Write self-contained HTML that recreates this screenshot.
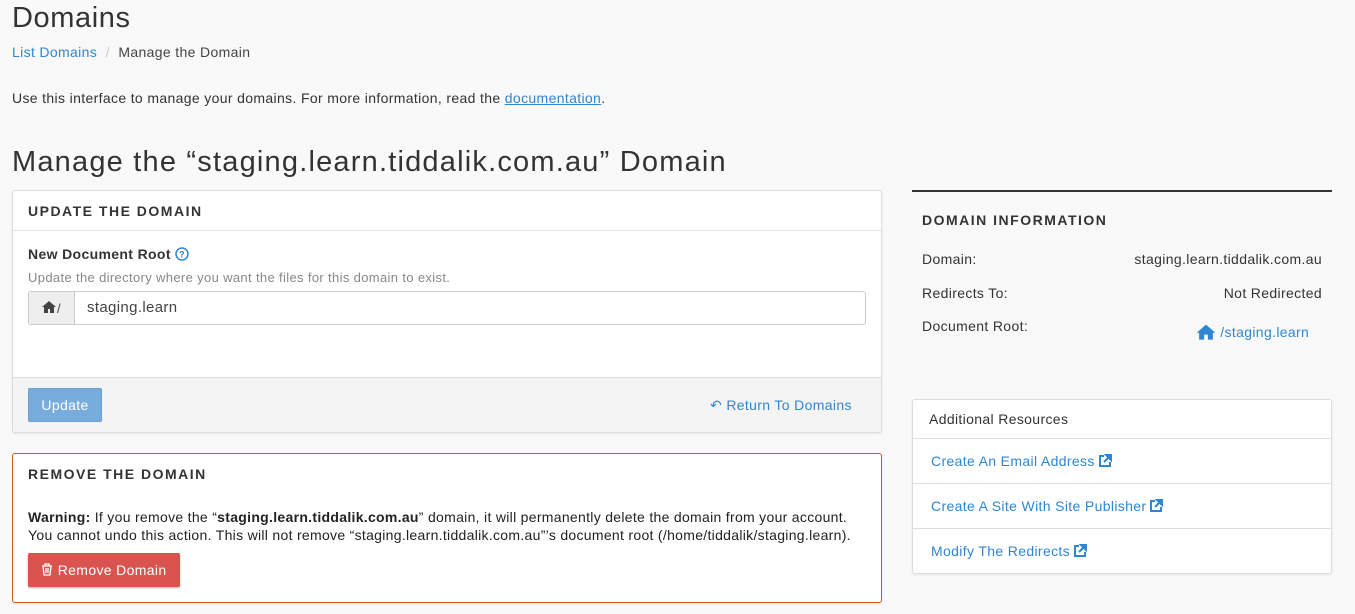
<!DOCTYPE html>
<html><head><meta charset="utf-8"><style>
*{box-sizing:border-box;margin:0;padding:0}
body{width:1355px;height:614px;overflow:hidden;background:#f9f9f9;font-family:"Liberation Sans",sans-serif;color:#333;font-size:14px;position:relative;letter-spacing:.35px}
.a{position:absolute;white-space:nowrap}
a,.lk{color:#2f86d2;text-decoration:none}
.panel{position:absolute;background:#fff;border:1px solid #ddd;border-radius:3px;box-shadow:0 1px 2px rgba(0,0,0,.08)}
.ph{font-size:14px;letter-spacing:1.5px;font-weight:bold;color:#333}
.ext{display:inline-block;vertical-align:-2px;margin-left:3px}
</style></head><body>
<div class="a" style="left:12px;top:2px;font-size:29px;color:#333;letter-spacing:.6px">Domains</div>
<div class="a" style="left:12px;top:44px;font-size:14px"><span class="lk">List Domains</span> <span style="color:#ccc">&nbsp;/&nbsp;</span> <span style="color:#444">Manage the Domain</span></div>
<div class="a" style="left:12px;top:90px;font-size:14px">Use this interface to manage your domains. For more information, read the <a style="text-decoration:underline">documentation</a>.</div>
<div class="a" style="left:12px;top:146px;font-size:29px;color:#333;letter-spacing:1.2px">Manage the “staging.learn.tiddalik.com.au” Domain</div>

<div class="panel" style="left:12px;top:190px;width:870px;height:243px">
 <div class="a ph" style="left:15px;top:12px">UPDATE THE DOMAIN</div>
 <div style="position:absolute;left:0;right:0;top:39px;border-top:1px solid #e3e3e3"></div>
 <div class="a" style="left:15px;top:55px;font-weight:bold;font-size:14px">New Document Root <svg width="14" height="14" viewBox="0 0 14 14" style="vertical-align:-2px"><circle cx="7" cy="7" r="6" fill="none" stroke="#2f86d2" stroke-width="1.5"/><text x="7" y="10.5" font-size="9" font-weight="bold" text-anchor="middle" fill="#2f86d2" font-family="Liberation Sans">?</text></svg></div>
 <div class="a" style="left:15px;top:79px;font-size:13px;color:#888">Update the directory where you want the files for this domain to exist.</div>
 <div style="position:absolute;left:15px;top:100px;width:838px;height:34px;border:1px solid #ccc;border-radius:3px;background:#fff">
  <div style="position:absolute;left:0;top:0;width:46px;height:32px;background:#eee;border-right:1px solid #ccc;font-size:13px;padding:8px 0 0 12px;color:#444"><svg width="16" height="13" viewBox="0 0 16 13"><path d="M8 1L1 7h2v6h4V9h2v4h4V7h2z" fill="#444"/></svg>/</div>
  <div class="a" style="left:58px;top:7px;font-size:15px;color:#444">staging.learn</div>
 </div>
 <div style="position:absolute;left:0;right:0;top:186px;bottom:0;background:#f4f4f4;border-top:1px solid #ddd"></div>
 <div class="a" style="left:15px;top:197px;width:74px;height:34px;background:#77acdd;border:1px solid #6aa0d3;border-radius:2px;color:#fff;font-size:14px;text-align:center;line-height:32px">Update</div>
 <div class="a lk" style="left:697px;top:206px;font-size:14px">↶ Return To Domains</div>
</div>

<div class="panel" style="left:12px;top:453px;width:870px;height:150px;border-color:#d9531e">
 <div class="a ph" style="left:15px;top:12px">REMOVE THE DOMAIN</div>
 <div class="a" style="left:15px;top:54px;font-size:14px;line-height:18px;color:#222;letter-spacing:.3px"><b>Warning:</b> If you remove the “<b>staging.learn.tiddalik.com.au</b>” domain, it will permanently delete the domain from your account.<br>You cannot undo this action. This will not remove “staging.learn.tiddalik.com.au”’s document root (/home/tiddalik/staging.learn).</div>
 <div class="a" style="left:15px;top:99px;width:152px;height:34px;background:#d9534f;border-radius:2px;color:#fff;font-size:14px;line-height:34px;text-align:center;box-shadow:0 1px 2px rgba(0,0,0,.3)"><svg width="12" height="13" viewBox="0 0 12 13" style="vertical-align:-1px"><path d="M1 3h10M4 3V1h4v2M2 3l1 9h6l1-9M5 5v5M7 5v5" fill="none" stroke="#fff" stroke-width="1.3"/></svg> Remove Domain</div>
</div>

<div style="position:absolute;left:912px;top:190px;width:420px;border-top:2px solid #333"></div>
<div class="a ph" style="left:922px;top:212px">DOMAIN INFORMATION</div>
<div class="a" style="left:922px;top:251px">Domain:</div><div class="a" style="right:33px;top:251px">staging.learn.tiddalik.com.au</div>
<div class="a" style="left:922px;top:285px">Redirects To:</div><div class="a" style="right:33px;top:285px">Not Redirected</div>
<div class="a" style="left:922px;top:318px">Document Root:</div>
<div class="a lk" style="left:1196px;top:323px"><svg width="20" height="17" viewBox="0 0 16 13" style="vertical-align:-3px"><path d="M8 1L0.5 7.5h2V13h4V9h3v4h4V7.5h2z" fill="#2f86d2"/></svg> /staging.learn</div>

<div class="panel" style="left:912px;top:399px;width:420px;height:175px">
 <div class="a" style="left:16px;top:11px;color:#333">Additional Resources</div>
 <div style="position:absolute;left:0;right:0;top:38px;border-top:1px solid #ddd"></div>
 <div class="a lk" style="left:18px;top:53px">Create An Email Address<svg class="ext" width="14" height="14" viewBox="0 0 14 14"><path d="M6 2H2v10h10V8" fill="none" stroke="#2f86d2" stroke-width="2"/><path d="M8 1h5v5zM12 2L6 8" stroke="#2f86d2" stroke-width="2" fill="#2f86d2"/></svg></div>
 <div style="position:absolute;left:0;right:0;top:83px;border-top:1px solid #ddd"></div>
 <div class="a lk" style="left:18px;top:98px">Create A Site With Site Publisher<svg class="ext" width="14" height="14" viewBox="0 0 14 14"><path d="M6 2H2v10h10V8" fill="none" stroke="#2f86d2" stroke-width="2"/><path d="M8 1h5v5zM12 2L6 8" stroke="#2f86d2" stroke-width="2" fill="#2f86d2"/></svg></div>
 <div style="position:absolute;left:0;right:0;top:128px;border-top:1px solid #ddd"></div>
 <div class="a lk" style="left:18px;top:143px">Modify The Redirects<svg class="ext" width="14" height="14" viewBox="0 0 14 14"><path d="M6 2H2v10h10V8" fill="none" stroke="#2f86d2" stroke-width="2"/><path d="M8 1h5v5zM12 2L6 8" stroke="#2f86d2" stroke-width="2" fill="#2f86d2"/></svg></div>
</div>
</body></html>
